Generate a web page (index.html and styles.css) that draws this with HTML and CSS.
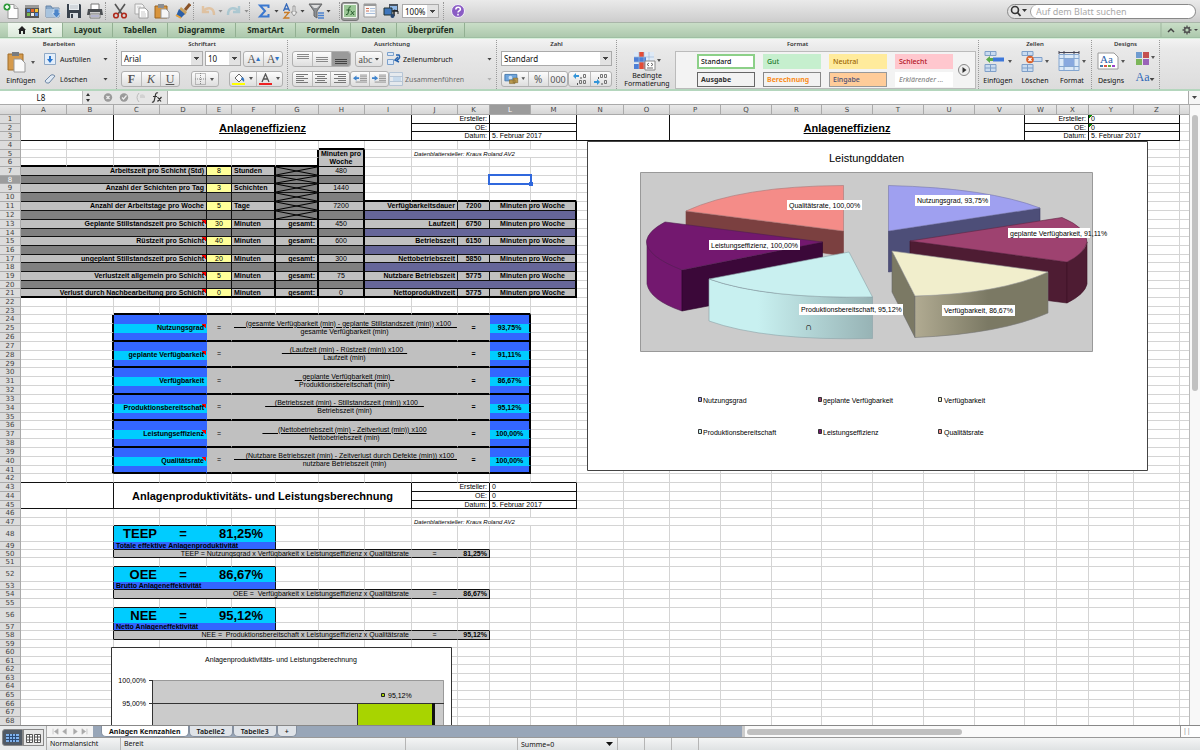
FILE: index.html
```html
<!DOCTYPE html>
<html lang="de">
<head>
<meta charset="utf-8">
<title>Anlageneffizienz</title>
<link rel="stylesheet" href="styles.css">
</head>
<body>
<div class="app">
<header class="toolbar">
  <button class="tool" aria-label="Neu"><svg viewBox="0 0 16 16"><path d="M5 1.500h6l4 4v10H5z" fill="#fff" stroke="#999"/><path d="M11 1.500v4h4" fill="#ddd" stroke="#999"/><circle cx="4" cy="4" r="3.500" fill="#2e9b3a"/><path d="M4 2v4M2 4h4" stroke="#fff" stroke-width="1.500"/></svg></button>
  <button class="tool" aria-label="Vorlagen"><svg viewBox="0 0 16 16"><path d="M1 2h14v13H1z" fill="#555"/><path d="M1 2h14v3H1z" fill="#9a9a9a"/><path d="M3 6h3v3H3zM11 10h3v3h-3z" fill="#5b8ee0"/><path d="M7 6h3v3H7z" fill="#e8622a"/><path d="M11 6h3v3h-3z" fill="#f4c430"/><path d="M3 10h3v3H3z" fill="#78b94a"/><path d="M7 10h3v3H7z" fill="#eee"/></svg></button>
  <button class="tool" aria-label="Öffnen"><svg viewBox="0 0 16 16"><path d="M1 3h5l1 2h7v9H1z" fill="#89a9cb" stroke="#6685a8"/><path d="M1 6h13v8H1z" fill="#a9c4de"/><path d="M9 6h5v4h2l-4.500 5L7 10h2z" fill="#4d86c9" stroke="#e9f1fa" stroke-width=".6"/></svg></button>
  <button class="tool" aria-label="Sichern"><svg viewBox="0 0 16 16"><path d="M1 1h13l1 1v13H1z" fill="#39424d"/><path d="M3 1h10v6H3z" fill="#e9edf0"/><path d="M4 10h8v5H4z" fill="#d9dee3"/><path d="M5 11h2v4H5z" fill="#39424d"/><path d="M4 3h8M4 5h8" stroke="#aeb5bc" stroke-width=".8"/></svg></button>
  <button class="tool" aria-label="Drucken"><svg viewBox="0 0 16 16"><path d="M4 1h8v6H4z" fill="#fff" stroke="#777"/><path d="M1 6h14l1 6H0z" fill="#4a4d51"/><path d="M3 9h10v2H3z" fill="#ccc"/><path d="M3 11h10v4H3z" fill="#f2f2f2" stroke="#777"/><path d="M4 13h8" stroke="#77a"/></svg></button>
  <i class="sep"></i>
  <button class="tool" aria-label="Ausschneiden"><svg viewBox="0 0 16 16"><path d="M3 1l7 10M13 1L6 11" stroke="#555" stroke-width="1.600"/><circle cx="4" cy="12.500" r="2.300" fill="none" stroke="#b02a1c" stroke-width="1.600"/><circle cx="12" cy="12.500" r="2.300" fill="none" stroke="#b02a1c" stroke-width="1.600"/></svg></button>
  <button class="tool" aria-label="Kopieren"><svg viewBox="0 0 16 16"><path d="M2 1h7l2 2v8H2z" fill="#f5f5f5" stroke="#aaa"/><path d="M6 5h6l3 3v7H6z" fill="#fff" stroke="#999"/><path d="M8 9h4M8 11h5M8 13h5M4 4h4" stroke="#bbb" stroke-width=".8"/></svg></button>
  <button class="tool" aria-label="Einsetzen"><svg viewBox="0 0 16 16"><path d="M1 3h12v12H1z" fill="#d9953c" stroke="#9b6420"/><path d="M4 1h6v4H4z" fill="#8b8f94"/><path d="M7 6h5l3 3v6H7z" fill="#f6f6f6" stroke="#999"/></svg></button>
  <button class="tool" aria-label="Format übertragen"><svg viewBox="0 0 16 16"><path d="M15 1l-5 6" stroke="#8a5328" stroke-width="3"/><path d="M6 4l6 5-2 3-6-5z" fill="#c9a15e"/><path d="M4 6l6 5-4 4-5-2z" fill="#2c5fa8"/><path d="M1 12l5 3" stroke="#e6a23a" stroke-width="2"/></svg></button>
  <i class="sep"></i>
  <button class="tool faded" aria-label="Rückgängig"><svg viewBox="0 0 16 16"><path d="M3 3v6h6M3 9c3-5 11-6 11 3" fill="none" stroke="#e2b27c" stroke-width="2.400"/></svg></button><i class="caret pale"></i>
  <button class="tool faded" aria-label="Wiederholen"><svg viewBox="0 0 16 16"><path d="M13 3v6H7M13 9C10 4 2 3 2 12" fill="none" stroke="#8dbccb" stroke-width="2.400"/></svg></button><i class="caret pale"></i>
  <i class="sep"></i>
  <button class="tool" aria-label="Summe"><svg viewBox="0 0 16 16"><path d="M12.500 5V2.500H4l5 5.500-5 5.500h8.500V11" fill="none" stroke="#3b78cf" stroke-width="2"/></svg></button><i class="caret"></i>
  <button class="tool" aria-label="Sortieren"><svg viewBox="0 0 16 16"><path d="M1.500 8L4.500 1l3 7M2.500 6h4" fill="none" stroke="#3469ba" stroke-width="1.300"/><path d="M2 9.500h5L2 15h5.500" fill="none" stroke="#c97b24" stroke-width="1.300"/><path d="M11 3h2v6h2l-3 4-3-4h2z" fill="#eee" stroke="#888" stroke-width=".8"/></svg></button><i class="caret"></i>
  <button class="tool" aria-label="Filter"><svg viewBox="0 0 16 16"><path d="M1 1h13L9 8v7l-3-2V8z" fill="#8b8f94" stroke="#666"/><path d="M3 2h9L9 5H6z" fill="#ddd"/><path d="M10 10h6M10 12.500h6M10 15h6" stroke="#4c82ce" stroke-width="1.300"/></svg></button><i class="caret"></i>
  <i class="sep wide"></i>
  <button class="tool pressed" aria-label="Formelgenerator"><svg viewBox="0 0 16 16"><path d="M1.500 1.500h13v13h-13z" fill="#9cc797" stroke="#f0f7ef"/><path d="M9 4c-2-1-2 1-2.500 4S6 12 4 11.500M4.500 7h4M9 8l3 4M12.500 8l-4 4" fill="none" stroke="#24582a" stroke-width="1"/></svg></button>
  <button class="tool" aria-label="Toolbox"><svg viewBox="0 0 16 16"><path d="M2 1h12v13H2z" fill="#f8f8f8" stroke="#999"/><path d="M2 1h12v2H2z" fill="#999"/><path d="M4 5.500h3M4 8h3" stroke="#d06b4f"/><path d="M8 5.500h5M8 8h5M4 10.500h9" stroke="#a9bfdc"/></svg></button>
  <button class="tool" aria-label="Medien"><svg viewBox="0 0 16 16"><path d="M6 1h9v8H6z" fill="#4b545f"/><path d="M7 3h7v4H7z" fill="#8fb8e8"/><path d="M1 5h8v7H1z" fill="#3f76bc" stroke="#233"/><path d="M11 7v6" stroke="#222" stroke-width="1.500"/><circle cx="9.500" cy="13" r="2" fill="#26456f"/><path d="M11 7l4 1v3" fill="none" stroke="#222"/></svg></button>
  <select class="zoom" aria-label="Zoom"><option>100%</option></select>
  <i class="sep"></i>
  <button class="tool" aria-label="Hilfe"><svg viewBox="0 0 16 16"><circle cx="8" cy="8" r="6.500" fill="#8a5cc4" stroke="#f6f2fb"/><path d="M5.800 6.500c0-3 4.600-3 4.600-.3C10.400 8 8 7.800 8 9.600M8 10.800v1.600" fill="none" stroke="#fff" stroke-width="1.500"/></svg></button>
  <label class="search"><svg viewBox="0 0 20 12"><circle cx="7" cy="5" r="3.500" fill="none" stroke="#333" stroke-width="1.600"/><path d="M9.500 7.500l3 3.500" stroke="#333" stroke-width="1.800"/><path d="M14 4h5l-2.500 3z" fill="#333"/></svg><input type="text" placeholder="Auf dem Blatt suchen" aria-label="Suchen"></label>
</header>

<nav class="tabs">
  <button class="tab on"><svg viewBox="0 0 8 8"><path d="M4 0l4 4H7v4H5V5H3v3H1V4H0z" fill="#222"/></svg>Start</button>
  <button class="tab t50">Layout</button><button class="tab t55">Tabellen</button><button class="tab t68">Diagramme</button><button class="tab t60">SmartArt</button><button class="tab t55">Formeln</button><button class="tab t46">Daten</button><button class="tab t68">Überprüfen</button>
  <span class="tabs-end"><svg viewBox="0 0 40 14"><path d="M1 0v14" stroke="#9db59d"/><path d="M8 9l3-3 3 3" fill="none" stroke="#444" stroke-width="1.500"/><circle cx="27" cy="7" r="2.400" fill="none" stroke="#555" stroke-width="1.600"/><path d="M27 2.500v2M27 9.500v2M22.500 7h2M29.500 7h2M24 4l1 1M29 9l1 1M30 4l-1 1M25 9l-1 1" stroke="#555" stroke-width="1.300"/><path d="M34 6h4l-2 2z" fill="#444"/></svg></span>
</nav>

<section class="ribbon">
  <div class="group"><h2>Bearbeiten</h2>
    <div class="body edit">
      <button class="big"><svg viewBox="0 0 28 22"><path d="M1 3h15v16H1z" fill="#d59a4c" stroke="#a06c28"/><path d="M5 1h7v4H5z" fill="#777b80"/><path d="M7 8h7l4 4v9H7z" fill="#fafafa" stroke="#999"/><path d="M24 10h4l-2 3z" fill="#555"/></svg>Einfügen</button>
      <div class="stack">
        <button class="line"><svg viewBox="0 0 12 12"><path d="M.5.500h11v11H.5z" fill="#e3eefa" stroke="#8fa9c6"/><path d="M5 3h2v3h2l-3 4-3-4h2z" fill="#2c77ce"/></svg><span>Ausfüllen</span><i class="caret"></i></button>
        <button class="line"><svg viewBox="0 0 12 12"><path d="M1 8l6-6q2-1 4 1L5 10q-3 1-4-2z" fill="#dfe9f4" stroke="#6f88a6"/></svg><span>Löschen</span><i class="caret"></i></button>
      </div>
    </div>
  </div>
  <div class="group"><h2>Schriftart</h2>
    <div class="body rows">
      <div class="row"><select class="w82" aria-label="Schrift"><option>Arial</option></select><select class="w36" aria-label="Grad"><option>10</option></select><span class="btns"><button class="serif big-a" aria-label="Größer">A<sup>▴</sup></button><button class="serif big-a" aria-label="Kleiner">A<sup>▾</sup></button></span></div>
      <div class="row"><span class="btns"><button class="serif"><b>F</b></button><button class="serif"><em>K</em></button><button class="serif"><u>U</u></button></span>
      <span class="btns"><button class="w26" aria-label="Rahmen"><svg viewBox="0 0 22 12"><path d="M1.500.500h10v11h-10zM6.500 0v12M1 6h11" fill="none" stroke="#888" stroke-dasharray="1 1"/><path d="M16 5h4l-2 3z" fill="#555"/></svg></button></span>
      <span class="btns"><button class="w26" aria-label="Füllfarbe"><svg viewBox="0 0 22 12"><path d="M3 5l4-4 4 4-4 4z" fill="#fff" stroke="#666"/><path d="M10 4q3 1 2 5l-3-3z" fill="#3574be"/><path d="M0 10h13v2H0z" fill="#ff0"/><path d="M17 4h4l-2 3z" fill="#555"/></svg></button><button class="w26" aria-label="Schriftfarbe"><svg viewBox="0 0 22 12"><path d="M3 9l3.500-8L10 9M4 6h5" fill="none" stroke="#555" stroke-width="1.300"/><path d="M0 10h13v2H0z" fill="#e22"/><path d="M17 4h4l-2 3z" fill="#555"/></svg></button></span></div>
    </div>
  </div>
  <div class="group"><h2>Ausrichtung</h2>
    <div class="body rows">
      <div class="row"><span class="btns"><button aria-label="Oben"><svg viewBox="0 0 14 12"><path d="M1 1.500h12M1 3.500h12M1 5.500h12" stroke="#888"/></svg></button><button aria-label="Mitte"><svg viewBox="0 0 14 12"><path d="M1 4.500h12M1 6.500h12M1 8.500h12" stroke="#888"/></svg></button><button class="down" aria-label="Unten"><svg viewBox="0 0 14 12"><path d="M1 6.500h12M1 8.500h12M1 10.500h12" stroke="#444"/></svg></button></span><span class="btns"><button class="w26 serif abc">abc<i class="caret"></i></button></span>
      <button class="line wrap"><svg viewBox="0 0 14 14"><path d="M.5.500h6v3h-6zM.5 7.500h6v5h-6z" fill="#dbe8f7" stroke="#7ba0cc"/><path d="M9 3h3q2 3-2 5M11 5L8 8l4 2" fill="none" stroke="#2763ad" stroke-width="1.500"/></svg><span>Zeilenumbruch</span><i class="caret"></i></button></div>
      <div class="row"><span class="btns"><button aria-label="Links"><svg viewBox="0 0 14 12"><path d="M1 1.500h12M1 3.500h8M1 5.500h12M1 7.500h8M1 9.500h12" stroke="#777"/></svg></button><button aria-label="Zentriert"><svg viewBox="0 0 14 12"><path d="M1 1.500h12M3 3.500h8M1 5.500h12M3 7.500h8M1 9.500h12" stroke="#777"/></svg></button><button aria-label="Rechts"><svg viewBox="0 0 14 12"><path d="M1 1.500h12M5 3.500h8M1 5.500h12M5 7.500h8M1 9.500h12" stroke="#777"/></svg></button></span><span class="btns"><button aria-label="Einzug verkleinern"><svg viewBox="0 0 16 12"><path d="M8 1.500h8M8 3.500h8M8 5.500h8M8 7.500h8M3 9.500h13" stroke="#888"/><path d="M0 5l4-3v2h3v2H4v2z" fill="#3e83cc"/></svg></button><button aria-label="Einzug vergrößern"><svg viewBox="0 0 16 12"><path d="M8 1.500h8M8 3.500h8M8 5.500h8M8 7.500h8M3 9.500h13" stroke="#888"/><path d="M7 5L3 2v2H0v2h3v2z" fill="#3e83cc"/></svg></button></span>
      <button class="line wrap faded"><svg viewBox="0 0 14 14"><path d="M.5.500h13v13H.5zM.5 4.500h13M.5 9.500h13" fill="#eaf1f8" stroke="#9bb4cf"/><path d="M4 5h8v4H4z" fill="#b9d7f3"/></svg><span>Zusammenführen</span><i class="caret"></i></button></div>
    </div>
  </div>
  <div class="group"><h2>Zahl</h2>
    <div class="body rows">
      <div class="row"><select class="w112" aria-label="Zahlenformat"><option>Standard</option></select></div>
      <div class="row"><span class="btns"><button class="w26" aria-label="Währung"><svg viewBox="0 0 24 12"><path d="M1 1h13v7H1z" fill="#6fa5dc" stroke="#4477ad"/><circle cx="7" cy="4.500" r="2" fill="#cde2f6"/><path d="M6 7h6v4H6zM10 5h5v5h-5z" fill="#b7964c" stroke="#7d642c" stroke-width=".6"/><path d="M19 4h4l-2 3z" fill="#555"/></svg></button><button class="num">%</button><button class="num nul">000</button></span><span class="btns"><button class="w22" aria-label="Dezimale hinzufügen"><svg viewBox="0 0 14 12"><path d="M0 3l3-3v2h3v2H3v2z" fill="#3495d8"/><path d="M8 4v2M4.500 10v2" stroke="#555"/><path d="M10.500 1.500h2v3h-2zM6.500 7.500h2v3h-2zM10.500 7.500h2v3h-2z" fill="none" stroke="#666" stroke-width=".9"/></svg></button><button class="w22" aria-label="Dezimale löschen"><svg viewBox="0 0 14 12"><path d="M6 9L3 6v2H0v2h3v2z" fill="#3495d8"/><path d="M4.500 4v2M8 10v2" stroke="#555"/><path d="M6.500 1.500h2v3h-2zM10.500 1.500h2v3h-2zM10.500 7.500h2v3h-2z" fill="none" stroke="#666" stroke-width=".9"/></svg></button></span></div>
    </div>
  </div>
  <div class="group"><h2>Format</h2>
    <div class="body fmt">
      <button class="big cond"><svg viewBox="0 0 28 20"><path d="M1 1h20v17H1z" fill="#dfeaf6"/><path d="M6 1h5v5H6zM6 11h6v7H6z" fill="#e34c36"/><path d="M1 6h12v5H1zM1 13h5v5H1z" fill="#4d7fd6"/><path d="M1 6h20M1 11h20M6 1v17M11 1v17M16 1v17" stroke="#9fb9d8" stroke-width=".7"/><path d="M12 10h10v9H12z" fill="#fff" stroke="#888"/><path d="M16 12l-2 1.500 2 1.500M18 12l2 1.500-2 1.500M14 17h6" fill="none" stroke="#444" stroke-width=".8"/><path d="M24 8h4l-2 3z" fill="#555"/></svg>Bedingte<br>Formatierung</button>
      <div class="gallery">
        <button class="chip std">Standard</button><button class="chip gut">Gut</button><button class="chip neu">Neutral</button><button class="chip bad">Schlecht</button>
        <button class="chip aus">Ausgabe</button><button class="chip ber">Berechnung</button><button class="chip ein">Eingabe</button><button class="chip erk">Erklärender ...</button>
      </div>
      <button class="more" aria-label="Weitere"><svg viewBox="0 0 12 12"><circle cx="6" cy="6" r="5.500" fill="#eee" stroke="#888"/><path d="M4.500 3L8.500 6l-4 3z" fill="#333"/></svg></button>
    </div>
  </div>
  <div class="group"><h2>Zellen</h2>
    <div class="body cells">
      <button class="big"><svg viewBox="0 0 28 22"><path d="M1 .500h11v4H1zM1 13.500h11v7H1zM6.500 .500v4M6.500 13v8M1 17h11" fill="#c9dbf0" stroke="#7f9fc8"/><path d="M9 6.500h11v4H9z" fill="#3e78da"/><path d="M2 8.500L6 5v2h3v3H6v2z" fill="#5cab4c"/><path d="M24 9h4l-2 3z" fill="#555"/></svg>Einfügen</button>
      <button class="big"><svg viewBox="0 0 28 22"><path d="M1 .500h11v4H1zM1 13.500h11v7H1zM6.500 .500v4M6.500 13v8M1 17h11" fill="#c9dbf0" stroke="#7f9fc8"/><path d="M10 6.500h11v4H10z" fill="#c9dbf0" stroke="#7f9fc8"/><circle cx="9" cy="8.500" r="3.800" fill="#d95f29"/><path d="M7.500 7l3 3M10.500 7l-3 3" stroke="#fff" stroke-width="1.200"/><path d="M24 9h4l-2 3z" fill="#555"/></svg>Löschen</button>
      <button class="big"><svg viewBox="0 0 28 22"><path d="M1 3.500h20v16H1zM1 7.500h20M1 15.500h20M6 3v16M16 3v16" fill="#dce9f7" stroke="#84a6d0"/><path d="M6 8h10v7H6z" fill="#89a9df"/><path d="M1 1.500h20M1 0v3M21 0v3M6 0v3M16 0v3" stroke="#445"/><path d="M24 9h4l-2 3z" fill="#555"/></svg>Format</button>
    </div>
  </div>
  <div class="group"><h2>Designs</h2>
    <div class="body cells">
      <button class="big"><svg viewBox="0 0 28 22"><path d="M1 2h16l4 4v12H1z" fill="#fff" stroke="#999"/><text x="3" y="12" class="aa">Aa</text><path d="M3 14h3v2H3z" fill="#47a"/><path d="M7 14h3v2H7z" fill="#d54"/><path d="M11 14h3v2h-3z" fill="#6a4"/><path d="M15 14h3v2h-3z" fill="#94c"/><path d="M24 9h4l-2 3z" fill="#555"/></svg>Designs</button>
      <div class="theme"><button aria-label="Farben"><svg viewBox="0 0 20 15"><path d="M1 1h6v6H1z" fill="#6f9bd0"/><path d="M8 1h6v6H8z" fill="#c45050"/><path d="M1 8h6v6H1z" fill="#7cb65a"/><path d="M8 8h6v6H8z" fill="#9a63b8"/><path d="M16 5h4l-2 3z" fill="#555"/></svg></button><button class="fonts">Aa<i class="caret"></i></button></div>
    </div>
  </div>
</section>

<div class="formula">
  <input class="name" type="text" value="L8" aria-label="Namenfeld">
  <svg class="fx" viewBox="0 0 82 13"><path d="M3 5l2-3 2 3zM3 8l2 3 2-3z" fill="#333"/><circle cx="25" cy="6.500" r="4.200" fill="#9a9a9a"/><path d="M23.500 5l3 3M26.500 5l-3 3" stroke="#eee" stroke-width="1.200"/><circle cx="41" cy="6.500" r="4.200" fill="#9a9a9a"/><path d="M39 6.500l1.500 1.500 3-3.500" fill="none" stroke="#eee" stroke-width="1.200"/><path d="M56 2q-4 4.500 0 9" fill="none" stroke="#bbb"/><path d="M57 4q3-2 5 1v2h-5z" fill="#d2d2d2"/><path d="M75 2c-2-1-2.500 1-3 4s-1 6-3 5M70 5.500h4M74.500 6l3.500 4.500M78.500 6l-4 4.500" fill="none" stroke="#333" stroke-width="1.200"/></svg>
  <input class="entry" type="text" aria-label="Formel">
  <button class="expand" aria-label="Erweitern"><i class="caret"></i></button>
</div>

<main class="work">
  <div class="sheet">
    <table id="grid"></table>
    <svg class="chart pie" viewBox="587 141 561 330">
      <defs><linearGradient id="aqua"><stop offset=".3" stop-color="#c8f0f0"/><stop offset="1" stop-color="#97b3b5"/></linearGradient><linearGradient id="sand"><stop offset="0" stop-color="#b1ab92"/><stop offset=".55" stop-color="#7b7964"/></linearGradient></defs>
      <path d="M587.500 141.500h560v329h-560z" fill="#fff" stroke="#444"/>
      <path d="M640.500 172.500h452v179h-452z" fill="#cbcbcb" stroke="#999"/>
      <g stroke-width=".6" stroke-linejoin="round">
      <path d="M686 211l157.500 20v25L686 232z" fill="#7b4040" stroke="#7b4040"/>
      <path d="M686 211Q740 186 843.500 185.500V231z" fill="#f48c88" stroke="#a77"/>
      <path d="M647 242v42Q650 300 682 311v-41z" fill="#73186f" stroke="#512050"/>
      <path d="M682 270l140.500-28v42L682 311z" fill="#3b0839" stroke="#2a0428"/>
      <path d="M665 222l157.500 20L682 270Q646 256 646.500 241Q648 231 665 222z" fill="#73186f" stroke="#512050"/>
      <path d="M888.500 231L1040 208v42l-151.500 22z" fill="#4d4e78" stroke="#3c3d66"/>
      <path d="M888.500 185.500Q988 188 1040 208L888.500 231z" fill="#9fa0f0" stroke="#77a"/>
      <path d="M910 241l157 21V303L910 283z" fill="#4e1c33" stroke="#3c1226"/>
      <path d="M1067 262Q1087 251 1087 242v42Q1085 294 1067 303z" fill="#4e1c33" stroke="#3c1226"/>
      <path d="M910 241L1062 217.500Q1087 228 1087 242Q1084 254 1067 262z" fill="#9e4270" stroke="#5e2743"/>
      <path d="M892 251v41l23 45.500V296z" fill="#7b7964" stroke="#666"/>
      <path d="M915 296Q1000 292 1048 272v41Q1000 334 915 337.500z" fill="url(#sand)" stroke="#777"/>
      <path d="M892 251l156 21Q1000 294 915 296z" fill="#f1eecc" stroke="#999"/>
      <path d="M709 279Q765 299 872.500 297v41.500Q765 341 709 321z" fill="url(#aqua)" stroke="#8ba3a8"/>
      <path d="M849 252l23.500 45Q765 299 709 279z" fill="#c9f0f0" stroke="#8ba3a8"/>
      </g>
      <g fill="#fff"><path d="M787 200h75v10h-75zM709 240h91v10h-91zM799 304h104v11H799zM915 195h75v11h-75zM1008 228h82v10h-82zM942 305h73v11h-73z"/></g>
      <g class="lbl"><text x="829" y="162" class="ttl">Leistungddaten</text><text x="789" y="208">Qualitätsrate, 100,00%</text><text x="711" y="248">Leistungseffizienz, 100,00%</text><text x="801" y="312">Produktionsbereitschaft, 95,12%</text><text x="917" y="203">Nutzungsgrad, 93,75%</text><text x="1010" y="236">geplante Verfügbarkeit, 91,11%</text><text x="944" y="313">Verfügbarkeit, 86,67%</text><text x="805" y="330" class="cap">∩</text>
      <text x="703" y="403">Nutzungsgrad</text><text x="823" y="403">geplante Verfügbarkeit</text><text x="944" y="403">Verfügbarkeit</text><text x="703" y="435">Produktionsbereitschaft</text><text x="823" y="435">Leistungseffizienz</text><text x="944" y="435">Qualitätsrate</text></g>
      <g stroke="#333"><path d="M698.500 397.500h3v4h-3z" fill="#9fa0f0"/><path d="M818.500 397.500h3v4h-3z" fill="#9e4270"/><path d="M938.500 397.500h3v4h-3z" fill="#f1eecc"/><path d="M698.500 429.500h3v4h-3z" fill="#c9f0f0"/><path d="M818.500 429.500h3v4h-3z" fill="#73186f"/><path d="M938.500 429.500h3v4h-3z" fill="#f48c88"/></g>
    </svg>
    <svg class="chart bars" viewBox="111 647 341 130">
      <path d="M111.500 647.500h340v129h-340z" fill="#fff" stroke="#333"/>
      <path d="M152 680h292v97H152z" fill="#cbcbcb"/><path d="M152 680.500h291.500V777" fill="none" stroke="#999"/>
      <path d="M152.500 680v97M149 680.500h4M149 703.500h295" stroke="#333" fill="none"/>
      <path d="M357.500 703.500h75V777h-75z" fill="#a8d400" stroke="#333"/><path d="M432 703h3v74h-3z" fill="#111"/>
      <path d="M381.500 693.500h3v3h-3z" fill="#a8d400" stroke="#222"/>
      <g class="lbl"><text x="281" y="662" text-anchor="middle">Anlagenproduktivitäts- und Leistungsberechnung</text><text x="146" y="683" text-anchor="end">100,00%</text><text x="146" y="706" text-anchor="end">95,00%</text><text x="388" y="698">95,12%</text></g>
    </svg>
  </div>
  <div class="vscroll"><i></i></div>
</main>

<footer class="foot">
  <div class="views"><button class="view on" aria-label="Normalansicht"><svg viewBox="0 0 18 14"><path d="M3 3h13v8H3z" fill="#7fb1ec"/><path d="M3 5.500h13M3 8.500h13M6.500 3v8M9.500 3v8M12.500 3v8" stroke="#2a4a76"/></svg></button><button class="view" aria-label="Seitenlayout"><svg viewBox="0 0 18 14"><path d="M2.500 3.500h6v8h-6zM10.500 3.500h6v8h-6zM2.500 6h6M2.500 9h6M10.500 6h6M10.500 9h6M5.500 4v7M13.500 4v7" fill="#fff" stroke="#555"/></svg></button></div>
  <div class="foot-main">
    <div class="sheetbar">
      <svg class="nav" viewBox="0 0 46 12"><path d="M4.500 3v6M10 3L6 6l4 3zM19 3l-4 3 4 3zM27 3l4 3-4 3zM36 3l4 3-4 3zM41.500 3v6" fill="#aaa" stroke="#aaa" stroke-width=".6"/></svg>
      <button class="stab on">Anlagen Kennzahlen</button><button class="stab">Tabelle2</button><button class="stab">Tabelle3</button><button class="stab plus">+</button>
      <div class="hscroll"><i></i></div><div class="split">||</div>
    </div>
    <div class="status"><span class="s1">Normalansicht</span><span class="s2">Bereit</span><span class="s3"></span><span class="s4">Summe=0<i class="caret"></i></span><span class="s5"></span><span class="s5"></span><span class="s5"></span></div>
  </div>
</footer>
</div>
<script src="grid.js"></script>
</body>
</html>
```
FILE: styles.css
```css
* { box-sizing: border-box; }
body { margin: 0; font: 7px/9px "Noto Sans", "Open Sans", sans-serif; color: #111; }
button, input, select { font: inherit; color: inherit; margin: 0; padding: 0; border: 0; background: none; border-radius: 0; }
button { white-space: nowrap; }
svg { display: block; }
h2 { margin: 0; font-size: 6px; line-height: 8px; font-weight: 600; text-align: center; color: #333; }
.app { display: flex; flex-direction: column; height: 100vh; overflow: hidden; background: #fff; }
.caret { flex: none; display: inline-block; width: 5px; height: 3px; background: #444; clip-path: polygon(0 0, 100% 0, 50% 100%); }
.caret.pale, .faded .caret { opacity: .5; }

.toolbar { flex: none; display: flex; align-items: center; height: 23px; background: linear-gradient(#eaeaea, #cdcdcd); border-bottom: 1px solid #a9b5a9; }
.tool { flex: none; width: 21px; height: 19px; display: flex; align-items: center; justify-content: center; }
.tool svg { width: 16px; height: 16px; }
.tool.pressed { background: #9c9c9c; border: 1px solid #777; border-radius: 3px; width: 18px; }
.faded { opacity: .6; }
.sep { flex: none; width: 4px; height: 18px; border-left: 1px dotted #999; }
.sep.wide { margin-left: 8px; width: 2px; }
select { appearance: none; height: 15px; line-height: 13px; padding-left: 2px; background: linear-gradient(#444, #444) right 3px top 5px / 5px 1px no-repeat, linear-gradient(#444, #444) right 4px top 6px / 3px 1px no-repeat, linear-gradient(#444, #444) right 5px top 7px / 1px 1px no-repeat, linear-gradient(90deg, #fff, #fff) left / calc(100% - 11px) 100% no-repeat, #e2e2e2; border: 1px solid #aaa; font-size: 8px; }
.zoom { width: 37px; height: 14px; margin: 0 4px 0 1px; }
.search { margin-left: auto; margin-right: 4px; display: flex; width: 189px; height: 15px; border: 1px solid #888; border-radius: 8px; background: #e4e4e4; overflow: hidden; align-items: center; }
.search svg { width: 20px; height: 12px; flex: none; margin-right: 2px; }
.search input { flex: 1; height: 13px; min-width: 0; background: #fff; border-left: 1px solid #999; border-radius: 7px; padding-left: 5px; font-size: 9px; }
.search input::placeholder { color: #aaa; }

.tabs { flex: none; display: flex; height: 15px; padding-left: 8px; background: linear-gradient(#c9dec7, #adc9ad); border-bottom: 1px solid #9fbfa3; }
.tab { border-right: 1px solid #92b092; font-weight: 700; font-size: 8px; line-height: 14px; color: #223022; }
.tab.on { width: 55px; background: linear-gradient(#f1f8f0, #dbe9da); display: flex; gap: 6px; align-items: center; justify-content: center; }
.tab.on svg { width: 8px; height: 8px; }
.t46 { width: 46px; } .t50 { width: 50px; } .t55 { width: 55px; } .t60 { width: 60px; } .t68 { width: 68px; }
.tabs-end { margin-left: auto; }
.tabs-end svg { width: 40px; height: 14px; }

.ribbon { flex: none; display: grid; grid-template-columns: 115px 171px 209px 120px minmax(362px, 1fr) 113px 68px 40px; height: 53px; padding: 1px 0 0 2px; background: linear-gradient(#f3f3f3, #e9e9e9 10px, #dcdcdc); border-top: 1px solid #d9f0dc; border-bottom: 2px solid #b4d6bd; }
.group { border-right: 1px dotted #999; padding: 0 4px; }
.body { display: flex; padding-top: 3px; }
.rows { flex-direction: column; gap: 4px; }
.row { display: flex; justify-content: space-between; height: 16px; }
.w82 { width: 82px; } .w36 { width: 36px; } .w112 { width: 112px; }
.btns { display: flex; border: 1px solid #b0b0b0; border-radius: 3px; background: linear-gradient(#fcfcfc, #dedede); overflow: hidden; }
.btns button { width: 19px; display: flex; align-items: center; justify-content: center; color: #555; }
.btns button + button { border-left: 1px solid #bbb; }
.btns svg { width: 14px; height: 12px; }
.btns .w26 { width: 26px; } .btns .w26 svg { width: 22px; } .btns .w22 { width: 21px; }
.btns .down { background: #9a9a9a; }
.serif { font-family: "Liberation Serif", serif; font-size: 12px; }
.serif sup { font-size: 8px; line-height: 8px; color: #2d74c8; }
.btns .abc { font-size: 10px; gap: 2px; }
.btns .num { font-size: 10px; width: 20px; } .btns .nul { font-size: 9px; }
.line { display: flex; align-items: center; gap: 4px; height: 16px; text-align: left; }
.line svg { width: 12px; height: 12px; }
.line span { flex: 1; }
.wrap { width: 105px; gap: 2px; } .wrap svg { width: 14px; height: 14px; }
.edit .big { width: 30px; }
.edit .stack { flex: 1; margin-left: 8px; display: flex; flex-direction: column; gap: 4px; }
.edit .line { padding-right: 4px; }
.big { display: flex; flex-direction: column; align-items: center; line-height: 8px; }
.big svg { width: 28px; height: 22px; margin-bottom: 4px; }
.cond { width: 52px; } .cond svg { height: 20px; margin-bottom: 1px; }
.gallery { flex: 1; display: grid; grid-template-columns: repeat(4, 58px); column-gap: 8px; row-gap: 3px; justify-content: end; padding: 2px 22px 2px 0; margin: 0 -18px 0 2px; height: 38px; border: 1px solid #bbb; background: #f3f3f3; }
.more { width: 12px; margin-right: 4px; z-index: 1; } .more svg { width: 12px; height: 12px; }
.chip { height: 15px; text-align: left; padding-left: 3px; border: 1px solid transparent; background: #fff; white-space: nowrap; overflow: hidden; font-weight: 500; }
.std { border: 2px solid #8cd088; padding-left: 2px; } .gut { background: #c6efce; color: #217a2a; } .neu { background: #ffeb9c; color: #9c6500; } .bad { background: #ffc7ce; color: #b01020; }
.aus { border-color: #666; background: #f2f2f2; font-weight: 700; color: #333; } .ber { border-color: #888; background: #f2f2f2; font-weight: 700; color: #fa8d20; } .ein { border-color: #999; background: #ffcc99; color: #4a4f76; } .erk { font-style: italic; color: #888; }
.cells { gap: 2px; justify-content: space-between; }
.cells .big { min-width: 30px; }
.aa { font: 11px "Liberation Serif", serif; fill: #2a5caa; }
.theme { display: flex; flex-direction: column; gap: 3px; } .theme svg { width: 20px; height: 15px; }
.fonts { font: 12px/16px "Liberation Serif", serif; color: #2f68b8; }

.formula { flex: none; display: flex; height: 14px; background: #e6e6e6; border-bottom: 1px solid #aaa; }
.name { width: 83px; background: #fff; text-align: center; border-right: 1px solid #bbb; font-size: 8px; }
.fx { width: 82px; height: 13px; margin-right: 2px; }
.entry { flex: 1; background: #fff; border-left: 1px solid #aaa; }
.expand { width: 12px; border-left: 1px solid #aaa; background: #f6f6f6; display: flex; align-items: center; justify-content: center; }

.work { flex: 1; min-height: 0; display: flex; }
.sheet { flex: 1; min-width: 0; position: relative; overflow: hidden; }
.vscroll { flex: none; width: 11px; padding: 10px 2px; background: #f8f8f8; border-left: 1px solid #bbb; }
.vscroll i { display: block; width: 6px; height: 46%; border-radius: 3px; background: #c1c1c1; }
table { table-layout: fixed; border-collapse: separate; border-spacing: 0; font: 7px/6px "Liberation Sans", Arial, sans-serif; color: #000; }
td, th { padding: 0 2px; border: 0 solid #d4d4d4; border-width: 0 1px 1px 0; white-space: nowrap; overflow: hidden; text-align: left; }
th { padding: 0; text-align: center; font: 7px/6px "DejaVu Sans", sans-serif; color: #444; background: linear-gradient(#e9e9e9, #d6d6d6); border-color: #aaa; }
tbody th { background: #dcdcdc; }
th.sel, tbody th.sel { background: #9c9c9c; color: #fff; }
.g { background-color: #c0c0c0; } .d { background-color: #808080; } .y { background-color: #ffff99; } .p { background-color: #666699; } .b { background-color: #3366ff; } .c { background-color: #00ccff; }
.r { text-align: right; } .m { text-align: center; } .s { font-weight: 700; } .i { font-size: 6px; font-style: italic; }
.t { font-size: 11px; line-height: 14px; } .k { font-size: 13px; line-height: 13px; } .u { text-decoration: underline; }
.f { line-height: 8px; } .h { line-height: 8px; padding: 0; }
.B { border-bottom-color: #111; } .R { border-right-color: #111; } .B2 { border-bottom: 2px solid #000; } .R2 { border-right: 2px solid #000; }
.x { background: linear-gradient(to top right, transparent calc(50% - 1px), #000 50%, transparent calc(50% + 1px)), linear-gradient(to bottom right, transparent calc(50% - 1px), #000 50%, transparent calc(50% + 1px)), #808080; }
.note { background-image: linear-gradient(to bottom left, #f00 50%, transparent 50%); background-size: 4px 4px; background-position: right top; background-repeat: no-repeat; }
.warn { background-image: linear-gradient(to bottom right, #080 50%, transparent 50%); background-size: 4px 4px; background-repeat: no-repeat; }
.cur { position: relative; overflow: visible; }
.cur::before { content: ""; position: absolute; inset: -2px; border: 2px solid #3068dd; }
.cur::after { content: ""; position: absolute; right: -3px; bottom: -3px; width: 4px; height: 4px; background: #3068dd; }
.chart { position: absolute; }
.pie { left: 587px; top: 36px; width: 561px; height: 330px; }
.bars { left: 111px; top: 542px; width: 341px; height: 130px; }
.lbl { font: 7px "Liberation Sans", Arial, sans-serif; }
.ttl { font-size: 11px; } .cap { font-size: 10px; }

.foot { flex: none; display: flex; height: 25px; background: #e8eaeb; border-top: 1px solid #888; }
.views { flex: none; width: 47px; display: flex; padding: 3px 2px; border-right: 1px solid #aaa; }
.view { width: 21px; height: 17px; border: 1px solid #888; background: #e8e8e8; } .view.on { background: #505a66; border-radius: 3px 0 0 3px; }
.view svg { width: 18px; height: 14px; }
.foot-main { flex: 1; min-width: 0; }
.sheetbar { display: flex; height: 12px; background: #98a6b8; border-bottom: 1px solid #999; }
.nav { width: 46px; height: 11px; background: #f4f4f4; margin-right: 8px; }
.stab { height: 11px; padding: 0 7px; background: #dfe3e8; border: 1px solid #8590a0; border-top: 0; border-radius: 0 0 5px 5px; line-height: 9px; font-weight: 600; }
.stab.on { background: #fff; font-weight: 700; }
.hscroll { flex: none; width: 38%; margin-left: auto; padding: 3px 2px; background: #fafafa; border-left: 3px solid #ccc; }
.hscroll i { display: block; width: 50%; height: 6px; border-radius: 3px; background: #c0c0c0; }
.split { width: 20px; padding-left: 2px; line-height: 10px; color: #888; background: #fff; border-left: 1px solid #999; }
.status { display: flex; height: 12px; line-height: 11px; background: linear-gradient(#f4f5f5, #dfe2e3); }
.status span { border-right: 1px solid #b5b5b5; padding-left: 3px; }
.status .s1 { width: 74px; } .status .s2 { width: 285px; } .status .s3 { width: 112px; } .status .s4 { width: 100px; display: flex; justify-content: space-between; align-items: center; padding-right: 4px; } .status .s5 { width: 27px; }
.status .caret { width: 7px; height: 4px; background: #111; }
```
FILE: grid.js
```js
const cols = [46,47,46,47,25,44,43,46,47,46,32,41,46,47,46,51,51,50,51,51,51,50,32,32,45,46,10];
const bottoms = [123,131,140,149,157,166,175,183,192,201,210,219,228,236,245,254,262,271,280,288,297,306,314,323,332,341,350,359,367,376,385,394,403,412,420,429,438,447,456,465,473,482,491,500,508,517,525,541,549,557,566,581,589,598,607,622,630,639,647,656,664,673,681,690,699,707,716,725];
const names = [...'ABCDEFGHIJKLMNOPQRSTUVWXYZ', ''];
const cells = bottoms.map(() => cols.map(() => ({ cls: [], text: '', cs: 1, rs: 1, hide: false })));

function parse(range) {
  const [a, b] = range.split(':').map(s => [names.indexOf(s[0]), +s.slice(1) - 1]);
  return [...a, ...(b || a)];
}
function paint(range, cls) {
  const [c1, r1, c2, r2] = parse(range);
  for (let r = r1; r <= r2; r++) for (let c = c1; c <= c2; c++) cells[r][c].cls.push(cls);
}
function put(range, text, cls) {
  const [c1, r1, c2, r2] = parse(range);
  for (let r = r1; r <= r2; r++) for (let c = c1; c <= c2; c++) cells[r][c].hide = true;
  Object.assign(cells[r1][c1], { text, cs: c2 - c1 + 1, rs: r2 - r1 + 1, hide: false });
  cells[r1][c1].cls.push(cls);
}

function head(r, left, mid, lab, val, title, cls, values) {
  put(`${left}${r}:${String.fromCharCode(mid.charCodeAt(0) - 1)}${r + 2}`, '', 'B R');
  put(`${mid}${r}:${String.fromCharCode(lab.charCodeAt(0) - 1)}${r + 2}`, title, 'B R m s t ' + cls);
  ['Ersteller:', 'OE:', 'Datum:'].forEach((t, i) => {
    put(`${lab}${r + i}:${String.fromCharCode(lab.charCodeAt(0) + 1)}${r + i}`, t, 'B R r');
    put(`${val}${r + i}:${String.fromCharCode(val.charCodeAt(0) + 1)}${r + i}`, values[i], 'B R' + (lab === 'W' && i < 2 ? ' warn' : ''));
  });
}
head(1, 'A', 'C', 'J', 'L', 'Anlageneffizienz', 'u', ['', '', '5. Februar 2017']);
head(1, 'N', 'P', 'W', 'Y', 'Anlageneffizienz', 'u', ['0', '0', '5. Februar 2017']);
head(43, 'A', 'C', 'J', 'L', 'Anlagenproduktivitäts- und Leistungsberechnung', '', ['0', '0', '5. Februar 2017']);
paint('A42:M42', 'B');
for (const r of [5, 47]) put(`J${r}:M${r}`, 'Datenblattersteller: Kraus Roland AV2', 'i');

paint('A6:G6', 'B2'); paint('H4', 'B2'); paint('G5:G6', 'R2'); paint('I10:M10', 'B2');
put('H5:H6', 'Minuten pro<br>Woche', 'g s m h B R2');
const inputs = [['Arbeitszeit pro Schicht (Std)', 8, 'Stunden', 480], ['Anzahl der Schichten pro Tag', 3, 'Schichten', 1440], ['Anzahl der Arbeitstage pro Woche', 5, 'Tage', 7200],
  ['Geplante Stillstandszeit pro Schicht', 30, 'Minuten', 450], ['Rüstzeit pro Schicht', 40, 'Minuten', 600], ['ungeplant Stillstandszeit pro Schicht', 20, 'Minuten', 300],
  ['Verlustzeit allgemein pro Schicht', 5, 'Minuten', 75], ['Verlust durch Nachbearbeitung pro Schicht', 0, 'Minuten', 0]];
inputs.forEach(([label, n, unit, week], i) => {
  const r = 7 + 2 * i, bot = i === 7 ? 'B2' : 'B';
  put(`A${r}:D${r}`, label, `g s r R ${bot}${i > 2 ? ' note' : ''}`);
  put(`E${r}`, n, `y m R ${bot}`);
  put(`F${r}`, unit, `g s R2 ${bot}`);
  put(`G${r}`, i > 2 ? 'gesamt:' : '', `${i > 2 ? 'g' : 'x'} s r R2 ${bot}`);
  put(`H${r}`, week, `g m R2 ${bot}`);
  if (i < 7) {
    put(`A${r + 1}:D${r + 1}`, '', 'd R B');
    put(`E${r + 1}`, '', 'd R B'); put(`F${r + 1}`, '', 'd R2 B');
    put(`G${r + 1}`, '', `${i < 3 ? 'x' : 'd'} R2 B`); put(`H${r + 1}`, '', 'd R2 B');
  }
});
[['Verfügbarkeitsdauer', 7200], ['Laufzeit', 6750], ['Betriebszeit', 6150], ['Nettobetriebszeit', 5850], ['Nutzbare Betriebszeit', 5775], ['Nettoproduktivzeit', 5775]].forEach(([label, n], i) => {
  const r = 11 + 2 * i, bot = i === 5 ? 'B2' : 'B';
  put(`I${r}:J${r}`, label, `g s r R ${bot}`); put(`K${r}`, n, `g s m R ${bot}`); put(`L${r}:M${r}`, 'Minuten pro Woche', `g s m R2 ${bot}`);
  if (i < 5) put(`I${r + 1}:M${r + 1}`, '', 'p B R2');
});

paint('C23:L23', 'B2'); paint('B24:B41', 'R2');
const n = '&nbsp;';
[['Nutzungsgrad', n.repeat(6) + '(gesamte Verfügbarkeit (min) - geplante Stillstandszeit (min)) x100' + n.repeat(3), 'gesamte Verfügbarkeit (min)', '93,75%'],
 ['geplante Verfügbarkeit', n.repeat(4) + '(Laufzeit (min) - Rüstzeit (min)) x100' + n.repeat(2), 'Laufzeit (min)', '91,11%'],
 ['Verfügbarkeit', n.repeat(4) + 'geplante Verfügbarkeit (min)' + n.repeat(2), 'Produktionsbereitschaft (min)', '86,67%'],
 ['Produktionsbereitschaft', n.repeat(5) + '(Betriebszeit (min) - Stillstandszeit (min)) x100' + n.repeat(3), 'Betriebszeit (min)', '95,12%'],
 ['Leistungseffizienz', n.repeat(8) + '(Nettobetriebszeit (min) - Zeitverlust (min)) x100', 'Nettobetriebszeit (min)', '100,00%'],
 ['Qualitätsrate', n.repeat(6) + '(Nutzbare Betriebszeit (min) - Zeitverlust durch Defekte (min)) x100' + n.repeat(2), 'nutzbare Betriebszeit (min)', '100,00%']].forEach(([label, top, low, pct], i) => {
  const r = 24 + 3 * i;
  put(`C${r}:D${r}`, '', 'b flat'); put(`C${r + 1}:D${r + 1}`, label, 'c s r flat' + (i === 2 ? '' : ' note')); put(`C${r + 2}:D${r + 2}`, '', 'b B2 flat');
  put(`E${r}:E${r + 2}`, '=', 'g m B2 flat');
  put(`F${r}:J${r + 2}`, `<span class="u">${top}</span><br>${low}`, 'g m f B2 flat');
  put(`K${r}:K${r + 2}`, '=', 'g s m B2 flat');
  put(`L${r}`, '', 'b R2 flat'); put(`L${r + 1}`, pct, 'c s m R2 flat'); put(`L${r + 2}`, '', 'b R2 B2 flat');
});

[[48, 'TEEP', '81,25%', 'Totale effektive Anlagenproduktivität', 'TEEP = Nutzungsgrad x Verfügbarkeit x Leistungseffizienz x Qualitätsrate'],
 [52, 'OEE', '86,67%', 'Brutto Anlageneffektivität', 'OEE =&nbsp; Verfügbarkeit x Leistungseffizienz x Qualitätsrate'],
 [56, 'NEE', '95,12%', 'Netto Anlageneffektivität', 'NEE =&nbsp; Produktionsbereitschaft x Leistungseffizienz x Qualitätsrate']].forEach(([r, key, pct, name, text]) => {
  paint(`C${r - 1}:F${r - 1}`, 'B'); paint(`B${r}:B${r + 2}`, 'R'); paint(`G${r + 1}:K${r + 1}`, 'B');
  put(`C${r}`, key, 'c s r k flat'); put(`D${r}`, '=', 'c s m k flat'); put(`E${r}:F${r}`, pct, 'c s m k R flat');
  put(`C${r + 1}:F${r + 1}`, name, 'b s R B flat');
  put(`C${r + 2}:I${r + 2}`, text, 'g r B flat'); put(`J${r + 2}`, '=', 'g m B flat'); put(`K${r + 2}`, pct, 'g s r B R flat');
});
paint('L8', 'cur');

const fills = { g: '#c0c0c0', b: '#3366ff', c: '#00ccff' };
let html = '<colgroup><col style="width:21px">' + cols.map(w => `<col style="width:${w}px">`).join('') + '</colgroup><thead><tr style="height:10px"><th></th>'
  + names.map(c => `<th${c === 'L' ? ' class="sel"' : ''}>${c}</th>`).join('') + '</tr></thead><tbody>';
cells.forEach((row, r) => {
  html += `<tr style="height:${bottoms[r] - (r ? bottoms[r - 1] : 114)}px"><th${r === 7 ? ' class="sel"' : ''}>${r + 1}</th>`;
  row.forEach(c => { if (!c.hide) html += `<td class="${c.cls.join(' ')}" colspan="${c.cs}" rowspan="${c.rs}">${c.text}</td>`; });
  html += '</tr>';
});
const grid = document.getElementById('grid');
grid.style.width = 21 + cols.reduce((a, b) => a + b) + 'px';
grid.innerHTML = html + '</tbody>';
grid.querySelectorAll('.flat').forEach(td => {
  const fill = fills[[...td.classList].find(k => fills[k])];
  if (!td.matches('.B, .B2')) td.style.borderBottomColor = fill;
  if (!td.matches('.R, .R2')) td.style.borderRightColor = fill;
});
```
